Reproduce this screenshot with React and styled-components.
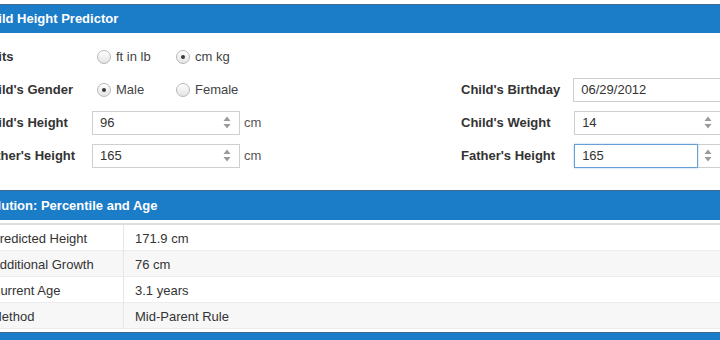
import React from "react";
import styled, { createGlobalStyle } from "styled-components";

const GlobalStyle = createGlobalStyle`
  body {
    margin: 0;
    background: #ffffff;
    font-family: "Liberation Sans", Arial, sans-serif;
    overflow: hidden;
  }
`;

const Page = styled.div`
  width: 760px;
  margin-left: -24px;
  padding-top: 4px;
`;

const PanelHeader = styled.div`
  height: ${(p) => p.$height}px;
  line-height: ${(p) => p.$height}px;
  background: #1b7cc8;
  border-top: 1px solid #3a6b94;
  color: #ffffff;
  font-size: 13px;
  font-weight: bold;
  padding-left: 5px;
`;

const Form = styled.div`
  display: flex;
  padding: 7px 0 18px 5px;
`;

const Column = styled.div`
  display: flex;
  flex-direction: column;
  width: ${(p) => p.$width}px;
`;

const Row = styled.div`
  display: flex;
  align-items: center;
  height: 33px;
`;

const Label = styled.div`
  width: ${(p) => p.$width}px;
  font-size: 13px;
  font-weight: bold;
  color: #333333;
`;

const Options = styled.div`
  display: flex;
  align-items: center;
  padding-left: 5px;
`;

const Option = styled.label`
  display: flex;
  align-items: center;
  gap: 5px;
  width: 79px;
  font-size: 13px;
  color: #444444;
`;

const Radio = styled.span`
  position: relative;
  width: 14px;
  height: 14px;
  border-radius: 50%;
  border: 1px solid #b8b8b8;
  background: linear-gradient(#ffffff, #e4e4e4);
  box-sizing: border-box;

  &::after {
    content: "";
    display: ${(p) => (p.$checked ? "block" : "none")};
    position: absolute;
    left: 4px;
    top: 4px;
    width: 4px;
    height: 4px;
    border-radius: 50%;
    background: #3a3a3a;
  }
`;

const NumberBox = styled.div`
  display: flex;
  width: ${(p) => p.$width}px;
  height: 24px;
  border: 1px solid #cfcfcf;
  box-sizing: border-box;
  background: #ffffff;
`;

const Field = styled.div`
  flex: 1;
  display: flex;
  align-items: center;
  margin: -1px 0 -1px -1px;
  padding-left: 7px;
  border: 1px solid ${(p) => (p.$focused ? "#6a9fd6" : "transparent")};
  box-shadow: ${(p) => (p.$focused ? "0 0 2px rgba(90,150,220,0.5)" : "none")};
  font-size: 13px;
  color: #333333;
`;

const Spinner = styled.div`
  width: 22px;
  display: flex;
  align-items: center;
  padding-left: 6px;
  box-sizing: border-box;
`;

const Unit = styled.span`
  margin-left: 4px;
  font-size: 13px;
  color: #555555;
`;

const Table = styled.table`
  width: 100%;
  border-collapse: collapse;
  border-top: 2px solid #dedede;
  margin-top: 3px;
  font-size: 13px;
  color: #333333;
`;

const Tr = styled.tr`
  height: 26px;
  background: ${(p) => (p.$odd ? "#f7f7f7" : "#ffffff")};
  border-bottom: 1px solid #ececec;
`;

const Td = styled.td`
  padding: 2px 0 0 ${(p) => (p.$first ? 15 : 11)}px;
  width: ${(p) => (p.$first ? "132px" : "auto")};
  border-right: ${(p) => (p.$first ? "1px solid #e6e6e6" : "none")};
`;

const Footer = styled.div`
  height: 10px;
  margin-top: 3px;
  background: #1b7cc8;
  border-top: 1px solid #3a6b94;
`;

const SpinArrows = () => (
  <svg width="8" height="13" viewBox="0 0 8 13">
    <path d="M4 0.5 L7.5 5 L0.5 5 Z" fill="#9a9a9a" />
    <path d="M0.5 8 L7.5 8 L4 12.5 Z" fill="#9a9a9a" />
  </svg>
);

function NumberInput({ value, width, focused, spin = true }) {
  return (
    <NumberBox $width={width}>
      <Field $focused={focused}>{value}</Field>
      {spin && (
        <Spinner>
          <SpinArrows />
        </Spinner>
      )}
    </NumberBox>
  );
}

const results = [
  ["Predicted Height", "171.9 cm"],
  ["Additional Growth", "76 cm"],
  ["Current Age", "3.1 years"],
  ["Method", "Mid-Parent Rule"],
];

export default function App() {
  return (
    <>
      <GlobalStyle />
      <Page>
        <PanelHeader $height={28}>Child Height Predictor</PanelHeader>
        <Form>
          <Column $width={480}>
            <Row>
              <Label $width={111}>Units</Label>
              <Options>
                <Option>
                  <Radio />
                  ft in lb
                </Option>
                <Option>
                  <Radio $checked />
                  cm kg
                </Option>
              </Options>
            </Row>
            <Row>
              <Label $width={111}>Child's Gender</Label>
              <Options>
                <Option>
                  <Radio $checked />
                  Male
                </Option>
                <Option>
                  <Radio />
                  Female
                </Option>
              </Options>
            </Row>
            <Row>
              <Label $width={111}>Child's Height</Label>
              <NumberInput value="96" width={148} />
              <Unit>cm</Unit>
            </Row>
            <Row>
              <Label $width={111}>Father's Height</Label>
              <NumberInput value="165" width={148} />
              <Unit>cm</Unit>
            </Row>
          </Column>
          <Column $width={260}>
            <Row />
            <Row>
              <Label $width={114}>Child's Birthday</Label>
              <NumberInput value="06/29/2012" width={150} spin={false} />
            </Row>
            <Row>
              <Label $width={114}>Child's Weight</Label>
              <NumberInput value="14" width={148} />
            </Row>
            <Row>
              <Label $width={114}>Father's Height</Label>
              <NumberInput value="165" width={148} focused />
            </Row>
          </Column>
        </Form>
        <PanelHeader $height={29}>Solution: Percentile and Age</PanelHeader>
        <Table>
          <tbody>
            {results.map(([k, v], i) => (
              <Tr key={k} $odd={i % 2 === 1}>
                <Td $first>{k}</Td>
                <Td>{v}</Td>
              </Tr>
            ))}
          </tbody>
        </Table>
        <Footer />
      </Page>
    </>
  );
}
